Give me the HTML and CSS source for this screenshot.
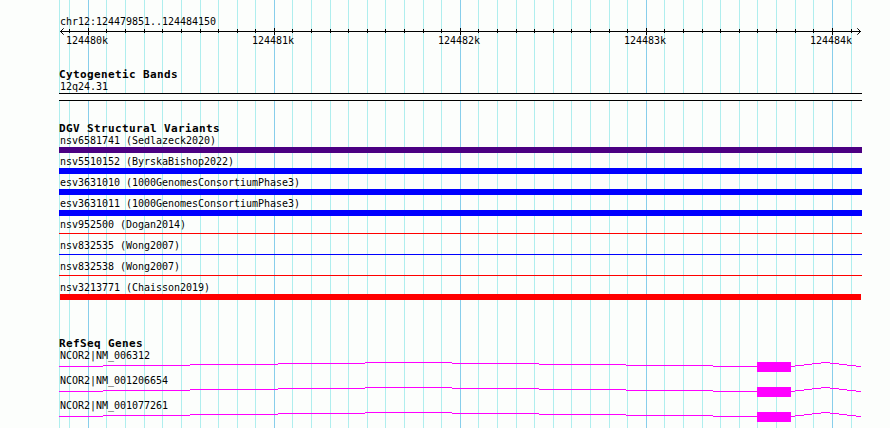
FILE: index.html
```html
<!DOCTYPE html>
<html lang="en">
<head>
<meta charset="utf-8">
<title>chr12:124479851..124484150</title>
<link rel="stylesheet" href="styles.css">
</head>
<body>
<main class="browser">
  <svg class="gridlines" width="890" height="428" shape-rendering="crispEdges" aria-hidden="true">
    <path class="minor" d="M59.5 0v428M69.5 0v428M106.5 0v428M125.5 0v428M144.5 0v428M162.5 0v428M181.5 0v428M200.5 0v428M218.5 0v428M237.5 0v428M255.5 0v428M292.5 0v428M311.5 0v428M330.5 0v428M348.5 0v428M367.5 0v428M385.5 0v428M404.5 0v428M423.5 0v428M441.5 0v428M478.5 0v428M497.5 0v428M516.5 0v428M534.5 0v428M553.5 0v428M571.5 0v428M590.5 0v428M609.5 0v428M627.5 0v428M664.5 0v428M683.5 0v428M702.5 0v428M720.5 0v428M739.5 0v428M757.5 0v428M776.5 0v428M795.5 0v428M813.5 0v428M851.5 0v428"/>
    <path class="major" d="M88.5 0v428M274.5 0v428M460.5 0v428M646.5 0v428M832.5 0v428"/>
  </svg>

  <header class="ruler">
    <div class="label">chr12:124479851..124484150</div>
    <svg class="axis" width="803" height="7" viewBox="59 28 803 7" aria-hidden="true">
      <path shape-rendering="crispEdges" d="M60 31.5H861M69.5 29v4M106.5 29v4M125.5 29v4M144.5 29v4M162.5 29v4M181.5 29v4M200.5 29v4M218.5 29v4M237.5 29v4M255.5 29v4M292.5 29v4M311.5 29v4M330.5 29v4M348.5 29v4M367.5 29v4M385.5 29v4M404.5 29v4M423.5 29v4M441.5 29v4M478.5 29v4M497.5 29v4M516.5 29v4M534.5 29v4M553.5 29v4M571.5 29v4M590.5 29v4M609.5 29v4M627.5 29v4M664.5 29v4M683.5 29v4M702.5 29v4M720.5 29v4M739.5 29v4M757.5 29v4M776.5 29v4M795.5 29v4M813.5 29v4M851.5 29v4M88.5 28v7M274.5 28v7M460.5 28v7M646.5 28v7M832.5 28v7"/>
      <path d="M63.7 28.3L60.5 31.5L63.7 34.7M857.3 28.3L860.5 31.5L857.3 34.7"/>
    </svg>
    <div class="ticks"><span>124480k</span><span>124481k</span><span>124482k</span><span>124483k</span><span>124484k</span></div>
  </header>

  <section class="cytobands">
    <h2>Cytogenetic Bands</h2>
    <div class="label">12q24.31</div>
    <div class="band"></div>
  </section>

  <section class="variants">
    <h2>DGV Structural Variants</h2>
    <div class="row"><div class="label">nsv6581741 (Sedlazeck2020)</div><div class="bar complex"></div></div>
    <div class="row"><div class="label">nsv5510152 (ByrskaBishop2022)</div><div class="bar gain"></div></div>
    <div class="row"><div class="label">esv3631010 (1000GenomesConsortiumPhase3)</div><div class="bar gain"></div></div>
    <div class="row"><div class="label">esv3631011 (1000GenomesConsortiumPhase3)</div><div class="bar gain"></div></div>
    <div class="row thin"><div class="label">nsv952500 (Dogan2014)</div><div class="bar loss"></div></div>
    <div class="row thin"><div class="label">nsv832535 (Wong2007)</div><div class="bar gain"></div></div>
    <div class="row thin"><div class="label">nsv832538 (Wong2007)</div><div class="bar loss"></div></div>
    <div class="row inset"><div class="label">nsv3213771 (Chaisson2019)</div><div class="bar loss"></div></div>
  </section>

  <section class="genes">
    <h2>RefSeq Genes</h2>
    <div class="gene"><div class="label">NCOR2|NM_006312</div>
      <svg width="803" height="10" viewBox="59 362 803 10" shape-rendering="crispEdges">
        <defs><g id="transcript">
          <path d="M59 366.5H103M103 365.5H190M190 364.5H278M278 363.5H365M365 362.5H452M452 363.5H539M539 364.5H626M626 365.5H713M713 366.5H757M791 366.5H795M795 365.5H804M804 364.5H812M812 363.5H821M821 362.5H830M830 363.5H839M839 364.5H847M847 365.5H856M856 366.5H861"/>
          <rect x="757" y="362" width="34" height="10"/>
        </g></defs>
        <use href="#transcript"/>
      </svg></div>
    <div class="gene"><div class="label">NCOR2|NM_001206654</div>
      <svg width="803" height="10" viewBox="59 362 803 10" shape-rendering="crispEdges"><use href="#transcript"/></svg></div>
    <div class="gene"><div class="label">NCOR2|NM_001077261</div>
      <svg width="803" height="10" viewBox="59 362 803 10" shape-rendering="crispEdges"><use href="#transcript"/></svg></div>
  </section>
</main>
</body>
</html>
```

FILE: styles.css
```css
* { box-sizing: border-box; }

body {
  margin: 0;
  background: #fcfefc;
  color: #000;
  font-family: "DejaVu Sans Mono", "Liberation Mono", monospace;
}

.browser {
  position: relative;
  width: 890px;
  height: 428px;
  padding: 13px 28px 0 59px;
  overflow: hidden;
}

svg { display: block; fill: none; }

.gridlines { position: absolute; inset: 0; z-index: -1; }
.minor { stroke: #afeeee; }
.major { stroke: #87ceeb; }

.label {
  height: 15px;
  padding: 2px 0 0 1px;
  font-size: 10px;
  line-height: 13px;
  letter-spacing: -0.02px;
  white-space: nowrap;
}

h2 {
  height: 15px;
  margin: 0;
  padding-top: 5px;
  font-size: 11px;
  font-weight: bold;
  line-height: 13px;
  letter-spacing: 0.378px;
  white-space: nowrap;
}

.ruler { height: 50px; }
.axis { stroke: #000; }

.ticks {
  display: grid;
  grid-template-columns: repeat(5, 186px);
  padding-left: 7px;
  margin-top: -1px;
  font-size: 10px;
  line-height: 13px;
  letter-spacing: -0.02px;
}

.cytobands { height: 54px; }

.band {
  height: 8px;
  border: solid #000;
  border-width: 1px 0;
  background: #fcfefc;
}

.variants { height: 215px; }
.row { height: 21px; }
.bar { height: 6px; }
.complex { background: #4b0082; }
.gain { background: #00f; }
.loss { background: #f00; }
.thin .label { margin-bottom: 2px; }
.thin .bar { height: 1px; }
.inset .bar { margin: 0 1px; }

.gene { height: 25px; }
.gene svg { stroke: #f0f; }
.gene rect { fill: #f0f; stroke: none; }
```
